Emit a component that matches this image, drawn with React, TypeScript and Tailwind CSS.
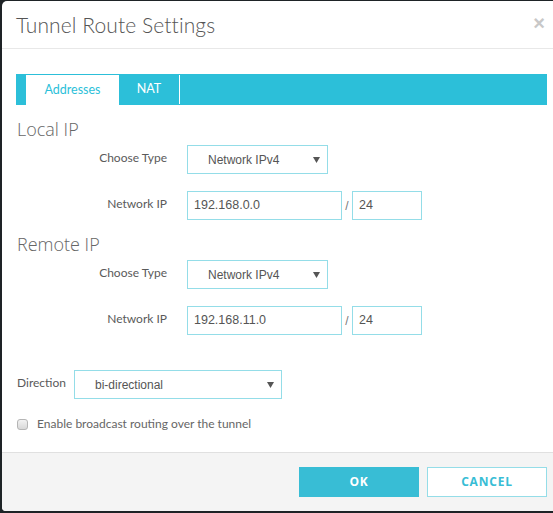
import React from "react";

const Arrow = () => (
  <svg width="7" height="6" viewBox="0 0 7 6" className="shrink-0">
    <path d="M0 0 H7 L3.5 6 Z" fill="#555" />
  </svg>
);

function Select({ value, w }: { value: string; w: string }) {
  return (
    <div
      className={`${w} h-[29px] border border-[#94dde8] bg-white flex items-center justify-between pl-[20px] pr-[7px] text-[12px] text-[#555] font-['Liberation_Sans',Arial,sans-serif]`}
    >
      <span>{value}</span>
      <Arrow />
    </div>
  );
}

function Input({ value, w }: { value: string; w: string }) {
  return (
    <div
      className={`${w} h-[29px] border border-[#94dde8] bg-white flex items-center pl-[6px] text-[12.5px] text-[#555] font-['Liberation_Sans',Arial,sans-serif]`}
    >
      {value}
    </div>
  );
}

function Section({ title, ip }: { title: string; ip: string }) {
  return (
    <div className="mt-[12px]">
      <div className="h-[24px] flex items-center text-[18px] font-light text-[#666] font-['Open_Sans',sans-serif] pl-px">
        {title}
      </div>
      <div className="mt-[4px] grid grid-cols-[151px_auto] gap-x-[20px] gap-y-[17px] items-center">
        <div className="text-right text-[12px] text-[#5a5a5a] font-['Lato',sans-serif] -mt-[4px]">Choose Type</div>
        <Select value="Network IPv4" w="w-[141px]" />
        <div className="text-right text-[12px] text-[#5a5a5a] font-['Lato',sans-serif] -mt-[4px]">Network IP</div>
        <div className="flex items-center">
          <Input value={ip} w="w-[155px]" />
          <span className="w-[10px] text-center text-[12px] text-[#777] font-['Liberation_Sans',sans-serif]">/</span>
          <Input value="24" w="w-[70px]" />
        </div>
      </div>
    </div>
  );
}

export default function App() {
  return (
    <div className="w-[553px] h-[513px] bg-[#1e2326] pt-px pl-[2px] pb-[2px] flex">
      <div className="flex-1 bg-white rounded-tl-[5px] rounded-bl-[4px] flex flex-col overflow-hidden">
        <div className="h-[48px] shrink-0 border-b border-[#e8e8e8] flex items-center justify-between pl-[14px] pr-[8px]">
          <div className="text-[21px] font-light text-[#555] font-['Lato',sans-serif] tracking-[0.1px] pt-[1px]">
            Tunnel Route Settings
          </div>
          <div className="text-[20px] font-bold text-[#c8c8c8] leading-none -mt-[3px] font-['Liberation_Sans',sans-serif]">×</div>
        </div>
        <div className="flex-1 pl-[14px] pr-[6px] pt-[25px]">
          <div className="h-[31px] bg-[#2cbfd9] flex pl-[10px] pt-px">
            <div className="w-[93px] h-[30px] bg-white flex items-center justify-center text-[12.5px] text-[#2cbfd9] font-['Lato',sans-serif]">
              Addresses
            </div>
            <div className="w-[61px] h-[29px] border-r border-white flex items-center justify-center text-[12.5px] text-white font-['Lato',sans-serif]">
              NAT
            </div>
          </div>
          <Section title="Local IP" ip="192.168.0.0" />
          <Section title="Remote IP" ip="192.168.11.0" />
          <div className="mt-[35px] flex items-center">
            <div className="w-[58px] pl-px text-[12px] text-[#5a5a5a] font-['Lato',sans-serif] -mt-[4px]">Direction</div>
            <Select value="bi-directional" w="w-[208px]" />
          </div>
          <div className="mt-[16px] flex items-center">
            <div className="ml-px w-[11px] h-[11px] rounded-[3px] border border-[#b5b5b5] bg-gradient-to-b from-[#f2f2f2] to-[#d8d8d8]" />
            <span className="ml-[9px] text-[12px] text-[#666] font-['Lato',sans-serif]">
              Enable broadcast routing over the tunnel
            </span>
          </div>
        </div>
        <div className="h-[59px] shrink-0 bg-[#f4f4f4] border-t border-[#e0e0e0] flex items-start justify-end gap-[8px] pt-[14px] pr-[6px]">
          <div className="w-[120px] h-[30px] bg-[#38bdd5] text-white text-[12px] font-bold tracking-[0.8px] flex items-center justify-center font-['Open_Sans',sans-serif]">
            OK
          </div>
          <div className="w-[120px] h-[30px] bg-white border border-[#94dde8] text-[#38bdd5] text-[12px] font-bold tracking-[0.8px] flex items-center justify-center font-['Open_Sans',sans-serif]">
            CANCEL
          </div>
        </div>
      </div>
    </div>
  );
}
